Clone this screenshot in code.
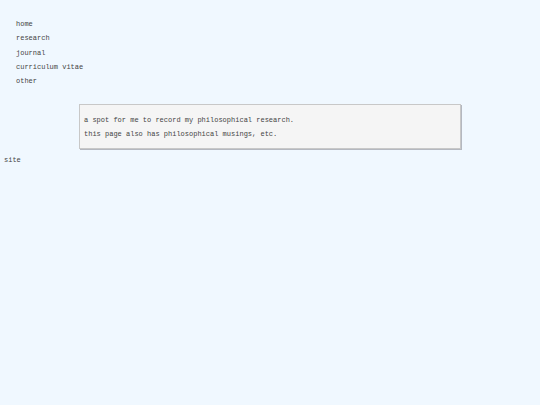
import React from "react";

const links = ["home", "research", "journal", "curriculum vitae", "other"];

export default function App() {
  return (
    <div className="min-h-[405px] bg-[#f0f8ff] text-[7px] leading-[14.3px] text-[#444] font-['Liberation_Mono','Courier_New',monospace]">
      <nav className="pl-[16px] pt-[17px]">
        <ul>
          {links.map((l) => (
            <li key={l}>{l}</li>
          ))}
        </ul>
      </nav>
      <div className="ml-[79px] mt-[16px] w-[382px] border border-[#c8c8c8] bg-[#f5f5f5] px-[4px] pt-[8px] pb-[7px] leading-[14px] shadow-[1px_1px_0_0_#b4b8c0]">
        <p>a spot for me to record my philosophical research.</p>
        <p>this page also has philosophical musings, etc.</p>
      </div>
      <div className="pl-[4px] pt-[4px]">site</div>
    </div>
  );
}
